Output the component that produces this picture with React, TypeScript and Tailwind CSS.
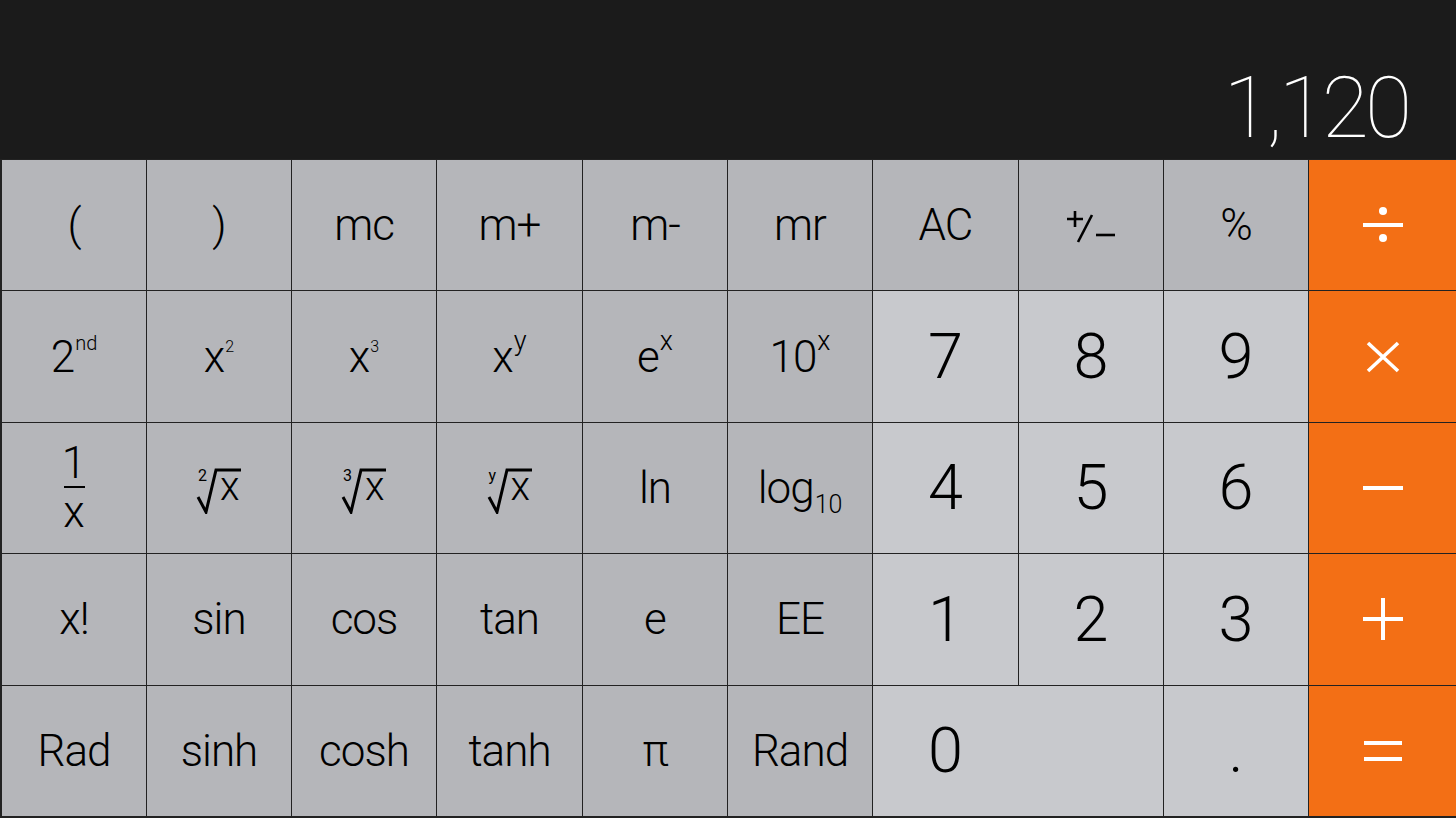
import React from "react";

const FN = "flex items-center justify-center bg-[#b5b6ba] text-black";
const NUM = "flex items-center justify-center bg-[#c8c9cd] text-black";
const OP = "flex items-center justify-center bg-[#f36f15]";

function Fn({ children }: { children: React.ReactNode }) {
  return (
    <div className={FN}>
      <span className="text-[44px] leading-none font-light tracking-[-1px] whitespace-nowrap">{children}</span>
    </div>
  );
}

function Num({ children }: { children: React.ReactNode }) {
  return (
    <div className={NUM}>
      <span className="text-[63px] leading-none font-light">{children}</span>
    </div>
  );
}

function Sup({ base, sup, size, offset }: { base: string; sup: string; size: string; offset: string }) {
  return (
    <div className={FN}>
      <span className="text-[44px] leading-none font-light tracking-[-1px] whitespace-nowrap">
        {base}
        <span className={`relative inline-block ${size} ${offset} ml-[1px] tracking-normal`}>{sup}</span>
      </span>
    </div>
  );
}

function Root({ index }: { index: string }) {
  return (
    <div className={FN}>
      <div className="relative w-[48px] h-[48px] mt-[4px]">
        <svg className="absolute left-0 top-0" width="48" height="48" viewBox="0 0 48 48" fill="none">
          <path d="M3 31 L11 46 L21 4 H46" stroke="black" strokeWidth="3" strokeLinejoin="miter" />
        </svg>
        <span className="absolute left-[3px] top-[2px] text-[16px] leading-none font-normal">{index}</span>
        <span className="absolute left-[25px] top-[1px] text-[40px] leading-none font-light">x</span>
      </div>
    </div>
  );
}

function Op({ children }: { children: React.ReactNode }) {
  return <div className={OP}>{children}</div>;
}

export default function App() {
  return (
    <div className="w-[1456px] h-[818px] bg-[#1b1b1b] flex flex-col font-[Roboto,sans-serif] overflow-hidden">
      <div className="h-[159px] flex items-end justify-end pr-[48px] pb-[8px]">
        <span className="text-white text-[86px] leading-none font-thin tracking-[-4px]">1,120</span>
      </div>
      <div className="h-[659px] grid grid-cols-[144px_144px_144px_145px_144px_144px_145px_144px_144px_1fr] grid-rows-5 gap-px bg-[#222222] pl-[2px] pt-px pb-[2px]">
        {/* Row 1 */}
        <Fn>(</Fn>
        <Fn>)</Fn>
        <Fn>mc</Fn>
        <Fn>m+</Fn>
        <Fn>m-</Fn>
        <Fn>mr</Fn>
        <Fn>AC</Fn>
        <div className={FN}>
          <svg width="52" height="36" viewBox="0 0 52 36" fill="none" className="mt-[2px]">
            <path d="M2 11 H18 M10 3 V19" stroke="black" strokeWidth="2.6" />
            <path d="M13 34 L27 7" stroke="black" strokeWidth="2.6" />
            <path d="M31 27 H50" stroke="black" strokeWidth="2.6" />
          </svg>
        </div>
        <Fn>%</Fn>
        <Op>
          <svg width="40" height="36" viewBox="0 0 40 36" fill="none">
            <path d="M0 18 H40" stroke="white" strokeWidth="4" />
            <circle cx="20" cy="4" r="4" fill="white" />
            <circle cx="20" cy="31" r="4" fill="white" />
          </svg>
        </Op>

        {/* Row 2 */}
        <Sup base="2" sup="nd" size="text-[20px]" offset="top-[-22px]" />
        <Sup base="x" sup="2" size="text-[16px]" offset="top-[-20px]" />
        <Sup base="x" sup="3" size="text-[16px]" offset="top-[-20px]" />
        <Sup base="x" sup="y" size="text-[27px]" offset="top-[-22px]" />
        <Sup base="e" sup="x" size="text-[27px]" offset="top-[-22px]" />
        <Sup base="10" sup="x" size="text-[27px]" offset="top-[-22px]" />
        <Num>7</Num>
        <Num>8</Num>
        <Num>9</Num>
        <Op>
          <svg width="34" height="32" viewBox="0 0 34 32" fill="none">
            <path d="M2 2 L32 30 M32 2 L2 30" stroke="white" strokeWidth="3.6" />
          </svg>
        </Op>

        {/* Row 3 */}
        <div className={FN}>
          <div className="flex flex-col items-center font-light">
            <span className="text-[44px] leading-none h-[44px]">1</span>
            <div className="w-[21px] h-[2px] bg-black mt-[1px] mb-[2px]" />
            <span className="text-[44px] leading-none h-[44px]">x</span>
          </div>
        </div>
        <Root index="2" />
        <Root index="3" />
        <Root index="y" />
        <Fn>ln</Fn>
        <div className={FN}>
          <span className="text-[44px] leading-none font-light tracking-[-1px] whitespace-nowrap">
            log
            <span className="relative inline-block text-[25px] top-[10px] ml-[1px] tracking-normal">10</span>
          </span>
        </div>
        <Num>4</Num>
        <Num>5</Num>
        <Num>6</Num>
        <Op>
          <svg width="40" height="8" viewBox="0 0 40 8" fill="none">
            <path d="M0 4 H40" stroke="white" strokeWidth="4" />
          </svg>
        </Op>

        {/* Row 4 */}
        <Fn>x!</Fn>
        <Fn>sin</Fn>
        <Fn>cos</Fn>
        <Fn>tan</Fn>
        <Fn>e</Fn>
        <Fn>EE</Fn>
        <Num>1</Num>
        <Num>2</Num>
        <Num>3</Num>
        <Op>
          <svg width="40" height="42" viewBox="0 0 40 42" fill="none">
            <path d="M0 21 H40 M20 0 V42" stroke="white" strokeWidth="4" />
          </svg>
        </Op>

        {/* Row 5 */}
        <Fn>Rad</Fn>
        <Fn>sinh</Fn>
        <Fn>cosh</Fn>
        <Fn>tanh</Fn>
        <Fn>π</Fn>
        <Fn>Rand</Fn>
        <div className="col-span-2 flex bg-[#c8c9cd] text-black">
          <div className="w-[145px] flex items-center justify-center">
            <span className="text-[63px] leading-none font-light">0</span>
          </div>
        </div>
        <Num>.</Num>
        <Op>
          <svg width="38" height="20" viewBox="0 0 38 20" fill="none">
            <path d="M0 2 H38 M0 18 H38" stroke="white" strokeWidth="4" />
          </svg>
        </Op>
      </div>
    </div>
  );
}
